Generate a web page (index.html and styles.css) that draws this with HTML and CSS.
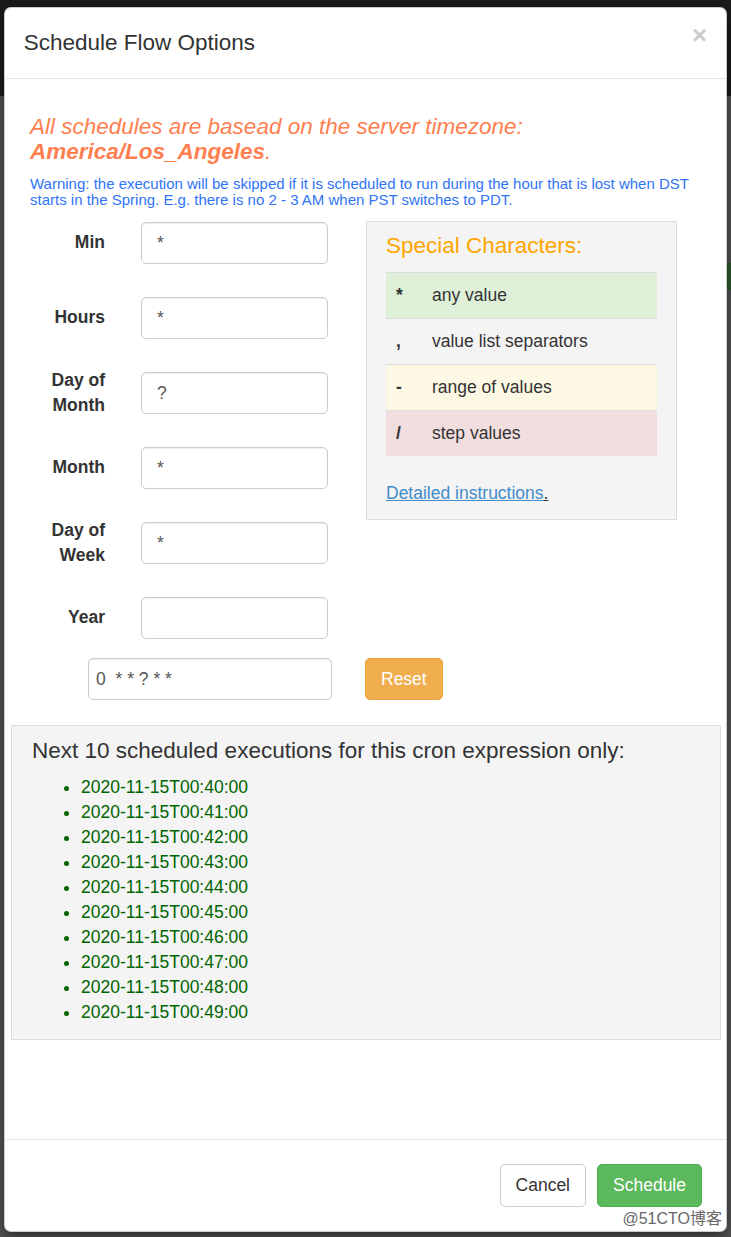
FILE: index.html
```
<!DOCTYPE html>
<html lang="en">
<head>
    <meta charset="UTF-8">
    <title>Schedule Flow Options</title>
    <link rel="stylesheet" href="styles.css">
</head>
<body>
    <div class="modal">
        <div class="modal-header">
            <h4 class="modal-title">Schedule Flow Options</h4>
            <button class="close" type="button">&times;</button>
        </div>

        <div class="modal-body">
            <div class="intro">
                <h4 class="tz-note">All schedules are basead on the server timezone:<br><b>America/Los_Angeles</b>.</h4>
                <p class="dst-warning">Warning: the execution will be skipped if it is scheduled to run during the hour that is lost when DST starts in the Spring. E.g. there is no 2 - 3 AM when PST switches to PDT.</p>
            </div>

            <div class="cron-row">
                <div class="cron-fields">
                    <div class="field"><label>Min</label><input class="form-control" type="text" value="*"></div>
                    <div class="field"><label>Hours</label><input class="form-control" type="text" value="*"></div>
                    <div class="field"><label>Day of Month</label><input class="form-control" type="text" value="?"></div>
                    <div class="field"><label>Month</label><input class="form-control" type="text" value="*"></div>
                    <div class="field"><label>Day of Week</label><input class="form-control" type="text" value="*"></div>
                    <div class="field"><label>Year</label><input class="form-control" type="text" value=""></div>
                </div>

                <div class="special-chars">
                    <h4>Special Characters:</h4>
                    <table class="chars-table">
                        <tr class="success"><td>*</td><td>any value</td></tr>
                        <tr><td>,</td><td>value list separators</td></tr>
                        <tr class="warning"><td>-</td><td>range of values</td></tr>
                        <tr class="danger"><td>/</td><td>step values</td></tr>
                    </table>
                    <a class="docs-link" href="#"><span class="link-text">Detailed instructions</span><span class="dot">.</span></a>
                </div>
            </div>

            <div class="cron-expr">
                <input class="form-control expr-input" type="text" value="0  * * ? * *">
                <button class="btn btn-warning" type="button">Reset</button>
            </div>

            <div class="next-runs">
                <h4>Next 10 scheduled executions for this cron expression only:</h4>
                <ul>
                    <li>2020-11-15T00:40:00</li>
                    <li>2020-11-15T00:41:00</li>
                    <li>2020-11-15T00:42:00</li>
                    <li>2020-11-15T00:43:00</li>
                    <li>2020-11-15T00:44:00</li>
                    <li>2020-11-15T00:45:00</li>
                    <li>2020-11-15T00:46:00</li>
                    <li>2020-11-15T00:47:00</li>
                    <li>2020-11-15T00:48:00</li>
                    <li>2020-11-15T00:49:00</li>
                </ul>
            </div>
        </div>

        <div class="modal-footer">
            <button class="btn btn-default" type="button">Cancel</button>
            <button class="btn btn-success" type="button">Schedule</button>
        </div>

        <span class="watermark">@51CTO博客</span>
    </div>
</body>
</html>
```

FILE: styles.css
```
* { margin: 0; padding: 0; box-sizing: border-box; }
body {
    font-family: "Liberation Sans", Arial, sans-serif;
    font-size: 17.5px;
    line-height: 25px;
    color: #333;
    background:
        linear-gradient(#2d5a2d, #2d5a2d) right 0 top 263px / 12px 27px no-repeat,
        linear-gradient(#1b1b1b 0, #1b1b1b 96px, #555 96px);
    min-height: 1237px;
    padding: 7px 4px 0 4px;
}

.modal {
    position: relative;
    width: 723px;
    height: 1225px;
    background: #fff;
    border: 1px solid rgba(0,0,0,0.2);
    border-radius: 7px;
    box-shadow: 0 5px 15px rgba(0,0,0,0.5);
    display: flex;
    flex-direction: column;
}

.modal-header {
    display: flex;
    justify-content: space-between;
    align-items: flex-start;
    padding: 18.75px;
    border-bottom: 1px solid #e5e5e5;
}
.modal-title { font-size: 22.5px; line-height: 32px; font-weight: normal; }
.close {
    background: none; border: 0; cursor: pointer;
    font-family: inherit; font-size: 26px; font-weight: bold; line-height: 1;
    color: #000; opacity: 0.2; margin-top: -5px;
}

.modal-body { flex: 1; padding: 0 5px 0 6px; }

.intro { padding: 0 16px 0 19px; }
.tz-note {
    margin-top: 36.5px;
    font-size: 22.5px; line-height: 24.75px;
    font-style: italic; font-weight: normal;
    color: #ff7f50;
}
.dst-warning { margin-top: 11px; font-size: 15px; line-height: 16.5px; color: #2f74f7; }

.cron-row { display: flex; align-items: flex-start; margin: 13.5px 0 0 19px; }
.cron-fields { width: 298px; margin-right: 38px; }
.field { display: flex; align-items: center; height: 42px; margin-bottom: 33px; }
.field:last-child { margin-bottom: 0; }
.field label { width: 75px; margin-right: 36px; margin-top: -1px; text-align: right; font-weight: bold; }

.form-control {
    height: 42px;
    border: 1px solid #ccc;
    border-radius: 5px;
    box-shadow: inset 0 1px 1px rgba(0,0,0,0.075);
    font-family: inherit; font-size: 17.5px; color: #555;
    background: #fff;
}
.field .form-control { width: 187px; padding: 0 15px; }

.special-chars {
    width: 311px;
    margin-top: -1px;
    padding: 12px 19px 13.5px 19px;
    background: #f4f4f4;
    border: 1px solid #ddd;
}
.special-chars h4 { font-size: 22.5px; line-height: 24.75px; font-weight: normal; color: #ffa500; margin-bottom: 13.5px; }
.chars-table { width: 271px; border-collapse: collapse; }
.chars-table td { border-top: 1px solid #ddd; padding: 10px; }
.chars-table td:first-child { width: 36px; font-weight: bold; }
.chars-table .success td { background: #dff0d8; }
.chars-table .warning td { background: #fcf8e3; }
.chars-table .danger td { background: #f2dede; }
.docs-link { display: inline-block; margin-top: 24.5px; text-decoration: none; }
.docs-link .link-text { color: #428bca; text-decoration: underline; }
.docs-link .dot { color: #333; text-decoration: underline; }

.cron-expr { display: flex; margin-top: 19px; padding-left: 77px; }
.expr-input { width: 244px; padding: 0 7px; margin-right: 33px; }

.btn {
    height: 43px;
    padding: 0 15px;
    border: 1px solid transparent;
    border-radius: 5px;
    font-family: inherit; font-size: 17.5px;
    cursor: pointer;
}
.btn-warning { height: 42px; background: #f0ad4e; border-color: #eea236; color: #fff; }
.btn-default { background: #fff; border-color: #ccc; color: #333; }
.btn-success { background: #5cb85c; border-color: #4cae4c; color: #fff; }

.next-runs {
    margin-top: 25px;
    padding: 13px 20px 14px 20px;
    background: #f4f4f4;
    border: 1px solid #ddd;
}
.next-runs h4 { font-size: 22.5px; line-height: 24.75px; font-weight: normal; margin-bottom: 11px; }
.next-runs ul { padding-left: 49px; color: #006400; }

.modal-footer {
    display: flex;
    justify-content: flex-end;
    gap: 11px;
    padding: 24px 24px 24px;
    border-top: 1px solid #e5e5e5;
}

.watermark {
    position: absolute;
    right: 4px;
    bottom: 2px;
    font-family: "Liberation Sans", "Noto Sans CJK SC", sans-serif;
    font-size: 16px;
    line-height: 20px;
    color: #666;
    text-shadow: 0 0 2px #fff, 0 0 2px #fff;
}
```
